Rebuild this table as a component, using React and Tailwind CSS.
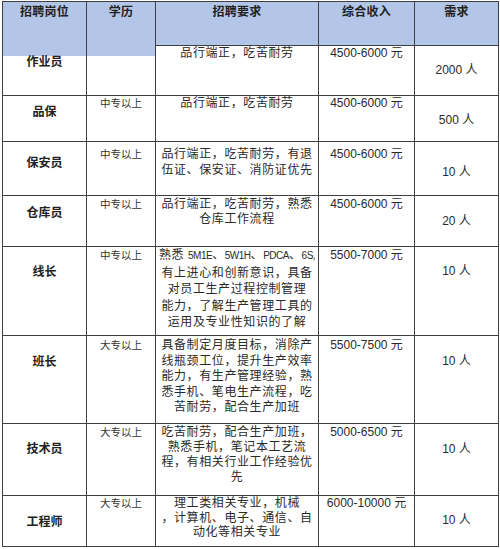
import React from 'react';

const Lat = ({ children }) => (
  <span className="text-[10px] tracking-[-0.5px]">{children}</span>
);

const rows = [
  {
    h: 'h-[50px]',
    pos: '作业员', posPad: 'pt-[8px]',
    edu: '', top: 'pt-0', reqLh: 'leading-[14px]', reqPad: 'pt-0',
    req: ['品行端正，吃苦耐劳'],
    pay: '4500-6000 元', need: '2000 人', needPad: 'pt-[16px]', blue: true,
  },
  {
    h: 'h-[46px]',
    pos: '品保', posPad: 'pt-[8px]',
    edu: '中专以上', top: 'pt-0', reqLh: 'leading-[14px]', reqPad: 'pt-0',
    req: ['品行端正，吃苦耐劳'],
    pay: '4500-6000 元', need: '500 人', needPad: 'pt-[16px]',
  },
  {
    h: 'h-[54px]',
    pos: '保安员', posPad: 'pt-[13px]',
    edu: '中专以上', top: 'pt-[5px]', reqLh: 'leading-[16px]', reqPad: 'pt-[4px]',
    req: ['品行端正，吃苦耐劳，有退', '伍证、保安证、消防证优先'],
    pay: '4500-6000 元', need: '10 人', needPad: 'pt-[22px]',
  },
  {
    h: 'h-[51px]',
    pos: '仓库员', posPad: 'pt-[9px]',
    edu: '中专以上', top: 'pt-[1px]', reqLh: 'leading-[15px]', reqPad: 'pt-[1px]',
    req: ['品行端正，吃苦耐劳，熟悉', '仓库工作流程'],
    pay: '4500-6000 元', need: '20 人', needPad: 'pt-[17px]',
  },
  {
    h: 'h-[89px]',
    pos: '线长', posPad: 'pt-[17px]',
    edu: '中专以上', top: 'pt-[1px]', reqLh: 'leading-[16.5px]', reqPad: 'pt-0',
    req: [
      <>
        熟悉 <Lat>5M1E</Lat>、<Lat>5W1H</Lat>、<Lat>PDCA</Lat>、<Lat>6S,</Lat>
      </>,
      '有上进心和创新意识，具备',
      '对员工生产过程控制管理',
      '能力，了解生产管理工具的',
      '运用及专业性知识的了解',
    ],
    pay: '5500-7000 元', need: '10 人', needPad: 'pt-[16px]',
  },
  {
    h: 'h-[88px]',
    pos: '班长', posPad: 'pt-[18px]',
    edu: '大专以上', top: 'pt-[2px]', reqLh: 'leading-[15.5px]', reqPad: 'pt-[2px]',
    req: [
      '具备制定月度目标，消除产',
      '线瓶颈工位，提升生产效率',
      '能力，有生产管理经验，熟',
      '悉手机、笔电生产流程，吃',
      '苦耐劳，配合生产加班',
    ],
    pay: '5500-7500 元', need: '10 人', needPad: 'pt-[17px]',
  },
  {
    h: 'h-[72px]',
    pos: '技术员', posPad: 'pt-[17px]',
    edu: '大专以上', top: 'pt-[1px]', reqLh: 'leading-[15px]', reqPad: 'pt-[1px]',
    req: [
      '吃苦耐劳，配合生产加班，',
      '熟悉手机，笔记本工艺流',
      '程，有相关行业工作经验优',
      '先',
    ],
    pay: '5000-6500 元', need: '10 人', needPad: 'pt-[17px]',
  },
  {
    h: 'h-[51px]',
    pos: '工程师', posPad: 'pt-[18px]',
    edu: '大专以上', top: 'pt-0', reqLh: 'leading-[14.5px]', reqPad: 'pt-0',
    req: ['理工类相关专业，机械', '，计算机、电子、通信、自', '动化等相关专业'],
    pay: '6000-10000 元', need: '10 人', needPad: 'pt-[16px]',
  },
];

const headers = ['招聘岗位', '学历', '招聘要求', '综合收入', '需求'];

const cell = 'border-r border-b border-[#3f3f3f] text-center';

export default function App() {
  return (
    <div className="w-[500px] h-[549px] bg-white pt-px pl-[2px] text-[#222] font-['Liberation_Sans','Noto_Sans_CJK_SC',sans-serif]">
      <div className="grid grid-cols-[84px_69px_163px_96px_84px] w-[497px] border-l border-t border-[#3f3f3f]">
        {/* header */}
        {headers.map((t, i) => (
          <div
            key={t}
            className={`h-[44px] bg-[#b4c6e7] border-r border-[#3f3f3f] text-center text-[12px] font-bold leading-[16px] pt-[2px] tracking-[0.3px] ${i < 2 ? '' : 'border-b'}`}
          >
            {t}
          </div>
        ))}

        {rows.map((r) => (
          <React.Fragment key={r.pos}>
            <div className={`${cell} ${r.h} ${r.posPad} text-[12px] font-bold leading-[16px] ${r.blue ? 'bg-[linear-gradient(to_bottom,#b4c6e7_10px,#fff_10px)]' : ''}`}>
              {r.pos}
            </div>
            <div className={`${cell} ${r.h} ${r.top} text-[10.5px] leading-[14px] text-[#333] ${r.blue ? 'bg-[linear-gradient(to_bottom,#b4c6e7_10px,#fff_10px)]' : ''}`}>
              {r.edu}
            </div>
            <div className={`${cell} ${r.h} ${r.reqPad} ${r.reqLh} text-[12px] tracking-[0.6px] text-[#2a2a2a]`}>
              {r.req.map((line, i) => (
                <div key={i} className="whitespace-nowrap">{line}</div>
              ))}
            </div>
            <div className={`${cell} ${r.h} ${r.top} text-[12px] leading-[14px] text-[#2a2a2a]`}>
              {r.pay}
            </div>
            <div className={`${cell} ${r.h} ${r.needPad} text-[12px] leading-[16px] text-[#2a2a2a]`}>
              {r.need}
            </div>
          </React.Fragment>
        ))}
      </div>
    </div>
  );
}
